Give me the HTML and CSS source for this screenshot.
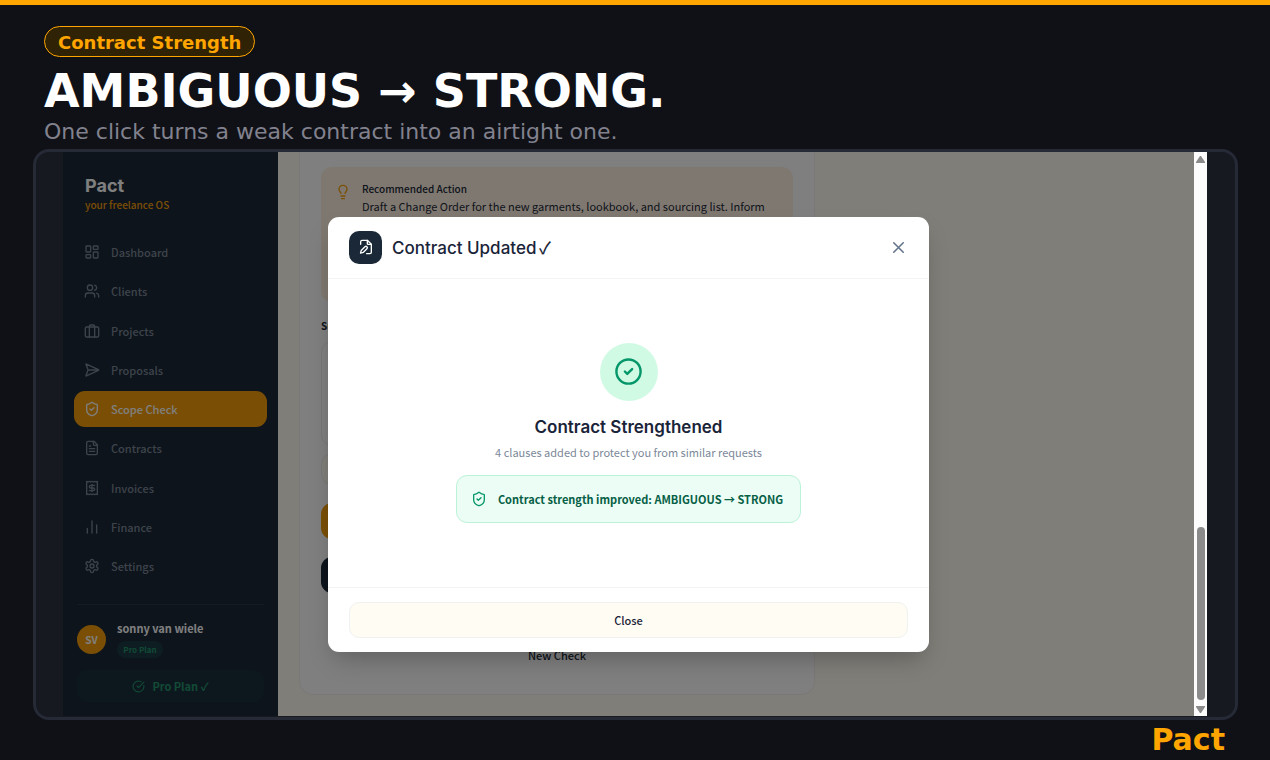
FILE: index.html
```
<!DOCTYPE html>
<html lang="en">
<head>
  <meta charset="utf-8">
  <title>Pact - Contract Strength</title>
  <link rel="stylesheet" href="styles.css">
</head>
<body>
  <header class="intro">
    <span class="tag">Contract Strength</span>
    <h1>AMBIGUOUS → STRONG.</h1>
    <p>One click turns a weak contract into an airtight one.</p>
  </header>

  <main class="frame">
    <div class="app">
      <aside class="sidebar">
        <div class="brand">
          <strong>Pact</strong>
          <span>your freelance OS</span>
        </div>
        <nav>
          <a href="#"><svg viewBox="0 0 24 24"><rect x="3" y="3" width="7" height="9" rx="1"/><rect x="14" y="3" width="7" height="5" rx="1"/><rect x="14" y="12" width="7" height="9" rx="1"/><rect x="3" y="16" width="7" height="5" rx="1"/></svg>Dashboard</a>
          <a href="#"><svg viewBox="0 0 24 24"><path d="M16 21v-2a4 4 0 0 0-4-4H6a4 4 0 0 0-4 4v2"/><circle cx="9" cy="7" r="4"/><path d="M22 21v-2a4 4 0 0 0-3-3.87M16 3.13a4 4 0 0 1 0 7.75"/></svg>Clients</a>
          <a href="#"><svg viewBox="0 0 24 24"><rect x="2" y="6" width="20" height="15" rx="2"/><path d="M8 21V5a2 2 0 0 1 2-2h4a2 2 0 0 1 2 2v16"/></svg>Projects</a>
          <a href="#"><svg viewBox="0 0 24 24"><path d="M3.7 3.05a.5.5 0 0 0-.68.63l2.84 7.62a2 2 0 0 1 0 1.4l-2.84 7.62a.5.5 0 0 0 .68.63l18-8.5a.5.5 0 0 0 0-.9zM6 12h16"/></svg>Proposals</a>
          <a href="#" class="active"><svg viewBox="0 0 24 24"><path d="M20 13c0 5-3.5 7.5-7.66 8.95a1 1 0 0 1-.67-.01C7.5 20.5 4 18 4 13V6a1 1 0 0 1 1-1c2 0 4.5-1.2 6.24-2.72a1.17 1.17 0 0 1 1.52 0C14.51 3.81 17 5 19 5a1 1 0 0 1 1 1z"/><path d="m9 12 2 2 4-4"/></svg>Scope Check</a>
          <a href="#"><svg viewBox="0 0 24 24"><path d="M15 2H6a2 2 0 0 0-2 2v16a2 2 0 0 0 2 2h12a2 2 0 0 0 2-2V7z"/><path d="M14 2v4a2 2 0 0 0 2 2h4M10 9H8M16 13H8M16 17H8"/></svg>Contracts</a>
          <a href="#"><svg viewBox="0 0 24 24"><path d="M4 2v20l2-1 2 1 2-1 2 1 2-1 2 1 2-1 2 1V2l-2 1-2-1-2 1-2-1-2 1-2-1-2 1z"/><path d="M16 8h-6a2 2 0 1 0 0 4h4a2 2 0 1 1 0 4H8M12 17.5v-11"/></svg>Invoices</a>
          <a href="#"><svg viewBox="0 0 24 24"><path d="M5 21v-7M12 21V3M19 21V9"/></svg>Finance</a>
          <a href="#"><svg viewBox="0 0 24 24"><path d="M12.22 2h-.44a2 2 0 0 0-2 2v.18a2 2 0 0 1-1 1.73l-.43.25a2 2 0 0 1-2 0l-.15-.08a2 2 0 0 0-2.73.73l-.22.38a2 2 0 0 0 .73 2.73l.15.1a2 2 0 0 1 1 1.72v.51a2 2 0 0 1-1 1.74l-.15.09a2 2 0 0 0-.73 2.73l.22.38a2 2 0 0 0 2.73.73l.15-.08a2 2 0 0 1 2 0l.43.25a2 2 0 0 1 1 1.73V20a2 2 0 0 0 2 2h.44a2 2 0 0 0 2-2v-.18a2 2 0 0 1 1-1.73l.43-.25a2 2 0 0 1 2 0l.15.08a2 2 0 0 0 2.73-.73l.22-.39a2 2 0 0 0-.73-2.73l-.15-.08a2 2 0 0 1-1-1.74v-.5a2 2 0 0 1 1-1.74l.15-.09a2 2 0 0 0 .73-2.73l-.22-.38a2 2 0 0 0-2.73-.73l-.15.08a2 2 0 0 1-2 0l-.43-.25a2 2 0 0 1-1-1.73V4a2 2 0 0 0-2-2z"/><circle cx="12" cy="12" r="3"/></svg>Settings</a>
        </nav>
        <div class="account">
          <div class="user">
            <span class="avatar">SV</span>
            <div>
              <strong>sonny van wiele</strong>
              <span class="badge">Pro Plan</span>
            </div>
          </div>
          <button class="plan"><svg viewBox="0 0 24 24"><path d="M21.8 10A10 10 0 1 1 17 3.34"/><path d="m9 11 3 3L22 4"/></svg>Pro Plan ✓</button>
        </div>
      </aside>

      <section class="content">
        <div class="card">
          <div class="advice">
            <svg viewBox="0 0 24 24"><path d="M15 14c.2-1 .7-1.7 1.5-2.5 1-.9 1.5-2.2 1.5-3.5A6 6 0 0 0 6 8c0 1 .2 2.2 1.5 3.5.7.7 1.3 1.5 1.5 2.5M9 18h6M10 22h4"/></svg>
            <div>
              <h4>Recommended Action</h4>
              <p>Draft a Change Order for the new garments, lookbook, and sourcing list. Inform</p>
            </div>
          </div>
          <h4 class="label">Su</h4>
          <div class="quote"></div>
          <div class="note"></div>
          <div class="bar amber"></div>
          <div class="bar navy"></div>
          <button class="new-check">New Check</button>
        </div>
      </section>

      <div class="overlay">
        <div class="modal" role="dialog" aria-labelledby="modal-title">
          <div class="modal-header">
            <span class="modal-icon"><svg viewBox="0 0 24 24"><path d="M4 8V4a2 2 0 0 1 2-2h8l6 6v12a2 2 0 0 1-2 2h-5"/><path d="M14 2v5a1 1 0 0 0 1 1h5"/><path d="M10.4 11.6a2 2 0 0 1 3 3l-5.6 5.5-4 1 1-4z"/></svg></span>
            <h2 id="modal-title">Contract Updated <span class="tick">✓</span></h2>
            <button class="close-x" aria-label="Close dialog"><svg viewBox="0 0 24 24"><path d="M18 6 6 18M6 6l12 12"/></svg></button>
          </div>
          <div class="modal-body">
            <span class="success"><svg viewBox="0 0 24 24"><circle cx="12" cy="12" r="10"/><path d="m9 12 2 2 4-4"/></svg></span>
            <h3>Contract Strengthened</h3>
            <p>4 clauses added to protect you from similar requests</p>
            <div class="result">
              <svg viewBox="0 0 24 24"><path d="M20 13c0 5-3.5 7.5-7.66 8.95a1 1 0 0 1-.67-.01C7.5 20.5 4 18 4 13V6a1 1 0 0 1 1-1c2 0 4.5-1.2 6.24-2.72a1.17 1.17 0 0 1 1.52 0C14.51 3.81 17 5 19 5a1 1 0 0 1 1 1z"/><path d="m9 12 2 2 4-4"/></svg>
              <span>Contract strength improved: AMBIGUOUS → STRONG</span>
            </div>
          </div>
          <div class="modal-footer">
            <button>Close</button>
          </div>
        </div>
      </div>
    </div>
    <div class="scrollbar">
      <svg viewBox="0 0 9 7"><path d="M4 0h1l4 6v1H0V6z"/></svg>
      <span class="thumb"></span>
      <svg viewBox="0 0 9 7"><path d="M0 0h9v1L5 7H4L0 1z"/></svg>
    </div>
  </main>

  <footer class="signature">Pact</footer>
</body>
</html>
```

FILE: styles.css
```
* {
  box-sizing: border-box;
}

body {
  margin: 0;
  min-height: 100vh;
  display: flex;
  flex-direction: column;
  border-top: 5px solid #ffa500;
  background: #101116;
  font-family: "DejaVu Sans", sans-serif;
}

h1, h2, h3, h4, p {
  margin: 0;
}

button {
  font: inherit;
  cursor: pointer;
}

svg {
  flex: none;
  fill: none;
  stroke: currentColor;
  stroke-width: 2;
  stroke-linecap: round;
  stroke-linejoin: round;
}

/* intro */
.intro {
  padding: 21px 44px 0;
}

.tag {
  display: inline-block;
  padding: 2px 13px 0;
  border: 1px solid #ffa500;
  border-radius: 16px;
  background: #302204;
  color: #ffa500;
  font-size: 18px;
  font-weight: bold;
  line-height: 27px;
  vertical-align: top;
}

.intro h1 {
  margin-top: 6px;
  color: #fff;
  font-size: 46px;
  line-height: 56px;
}

.intro p {
  margin-bottom: 5px;
  color: #82828f;
  font-size: 22px;
  line-height: 25px;
}

/* window */
.frame {
  flex: 1;
  display: flex;
  margin: 0 32px 0 33px;
  padding: 0 28px 1px 27px;
  border: 3px solid #262a37;
  border-radius: 16px;
  background: #171921;
  font-family: "Noto Sans CJK SC", "Noto Sans", sans-serif;
  font-size: 11px;
}

.app {
  flex: 1;
  display: flex;
  position: relative;
  overflow: hidden;
}

.sidebar {
  width: 215px;
  display: flex;
  flex-direction: column;
  padding: 22px 11px 14px;
  background: #1a2838;
}

.brand {
  padding-left: 11px;
}

.brand strong,
.brand span {
  display: block;
}

.brand strong {
  color: #fff;
  font-family: Inter, sans-serif;
  font-size: 18px;
  line-height: 24px;
}

.brand span {
  color: #f59e0b;
  font-size: 10px;
  font-weight: 500;
  line-height: 14px;
}

nav {
  flex: 1;
  display: flex;
  flex-direction: column;
  justify-content: space-between;
  margin: 22px 0 20px;
}

nav a {
  display: flex;
  align-items: center;
  gap: 11px;
  height: 36px;
  padding-left: 10px;
  border-radius: 11px;
  color: #7c8796;
  font-weight: 500;
  text-decoration: none;
}

nav svg {
  width: 16px;
  height: 16px;
}

nav .active {
  background: #f59e0b;
  color: #fff;
}

.account {
  margin: 0 3px;
  border-top: 1px solid #2a3747;
}

.user {
  display: flex;
  align-items: center;
  gap: 11px;
  padding: 15px 0 12px;
}

.avatar {
  width: 29px;
  height: 29px;
  border-radius: 50%;
  background: #f59e0b;
  color: #fff;
  font-size: 10px;
  font-weight: bold;
  line-height: 29px;
  text-align: center;
}

.user strong {
  display: block;
  color: #fff;
  font-weight: bold;
  line-height: 17px;
  margin-bottom: 4px;
}

.badge {
  display: block;
  width: 46px;
  border-radius: 9px;
  background: #1a3b42;
  color: #24946c;
  font-size: 8px;
  font-weight: bold;
  line-height: 17px;
  text-align: center;
}

.plan {
  width: 100%;
  height: 32px;
  display: flex;
  align-items: center;
  justify-content: center;
  gap: 7px;
  padding: 0;
  border: 0;
  border-radius: 11px;
  background: #1a303d;
  color: #24946c;
  font-weight: bold;
}

.plan svg {
  width: 13px;
  height: 13px;
}

/* page behind the dialog */
.content {
  flex: 1;
  display: flex;
  padding: 0 21px 21px;
  background: #fffcf3;
}

.card {
  width: 516px;
  padding: 15px 21px 0;
  border: 1px solid #f3f1ec;
  border-top: 0;
  border-radius: 0 0 14px 14px;
  background: #fff;
  color: #1a2838;
}

.advice {
  display: flex;
  gap: 11px;
  height: 135px;
  padding: 14px;
  border-radius: 11px;
  background: #fff1e0;
}

.advice svg {
  width: 16px;
  height: 16px;
  margin-top: 3px;
  color: #f59e0b;
}

.card h4 {
  font-size: 10px;
  font-weight: 500;
  line-height: 16px;
}

.advice p {
  line-height: 19px;
  white-space: nowrap;
}

.card .label {
  margin-top: 16px;
  font-weight: bold;
}

.quote,
.note {
  margin-top: 7px;
  border: 1px solid #eee;
  border-radius: 11px;
  background: #fefefe;
}

.quote {
  height: 105px;
}

.note {
  height: 32px;
  background: #fffcf3;
}

.bar {
  height: 36px;
  margin-top: 18px;
  border-radius: 11px;
}

.amber {
  background: #f59e0b;
}

.navy {
  background: #1a2838;
}

.new-check {
  width: 100%;
  height: 36px;
  margin-top: 44px;
  border: 0;
  background: none;
  color: #1a2838;
  font-weight: 500;
}

/* dialog */
.overlay {
  position: absolute;
  inset: 0;
  display: flex;
  align-items: center;
  justify-content: center;
  background: rgba(0, 0, 0, 0.5);
}

.modal {
  width: 601px;
  border-radius: 11px;
  background: #fff;
  box-shadow: 0 12px 24px -6px rgba(0, 0, 0, 0.25);
  color: #1a2438;
}

.modal-header {
  display: flex;
  align-items: center;
  gap: 10px;
  padding: 14px 21px;
  border-bottom: 1px solid #f3f4f6;
}

.modal-icon {
  width: 33px;
  height: 33px;
  display: grid;
  place-items: center;
  border-radius: 10px;
  background: #1a2838;
  color: #fff;
}

.modal-icon svg {
  width: 16px;
  height: 16px;
}

.modal h2,
.modal h3 {
  font-family: Inter, sans-serif;
  font-size: 17px;
  font-weight: 500;
  line-height: 24px;
}

.tick {
  margin-left: -2px;
  font-family: "Noto Sans CJK SC", "Noto Sans", sans-serif;
}

.close-x {
  display: flex;
  margin-left: auto;
  padding: 0;
  border: 0;
  background: none;
  color: #64748b;
}

.close-x svg {
  width: 19px;
  height: 19px;
}

.modal-body {
  display: flex;
  flex-direction: column;
  align-items: center;
  padding: 64px 21px;
}

.success {
  width: 58px;
  height: 58px;
  display: grid;
  place-items: center;
  border-radius: 50%;
  background: #d1fae5;
  color: #059669;
}

.success svg {
  width: 29px;
  height: 29px;
}

.modal h3 {
  margin-top: 14px;
  font-weight: 600;
}

.modal-body p {
  margin: 4px 0 14px;
  color: #7b8798;
  line-height: 18px;
}

.result {
  display: flex;
  align-items: center;
  gap: 11px;
  height: 48px;
  padding: 0 17px 0 14px;
  border: 1px solid #bbf3d8;
  border-radius: 11px;
  background: #ecfdf5;
  color: #065f46;
  font-weight: bold;
}

.result svg {
  width: 16px;
  height: 16px;
  color: #059669;
}

.modal-footer {
  padding: 14px 21px;
  border-top: 1px solid #f3f4f6;
}

.modal-footer button {
  width: 100%;
  height: 36px;
  border: 1px solid #f1f1f1;
  border-radius: 10px;
  background: #fffcf3;
  color: #1a2438;
  font-weight: 500;
}

/* scrollbar */
.scrollbar {
  width: 13px;
  display: flex;
  flex-direction: column;
  align-items: center;
  padding: 4px 0 3px;
  background: #fcfcfc;
}

.scrollbar svg {
  width: 9px;
  height: 7px;
  fill: #8b8b8b;
  stroke: none;
}

.thumb {
  width: 8px;
  height: 31%;
  margin: auto 0 6px;
  border-radius: 4px;
  background: #8b8b8b;
}

.signature {
  height: 40px;
  padding-right: 45px;
  color: #ffa500;
  font-size: 30px;
  font-weight: bold;
  line-height: 40px;
  text-align: right;
}
```
